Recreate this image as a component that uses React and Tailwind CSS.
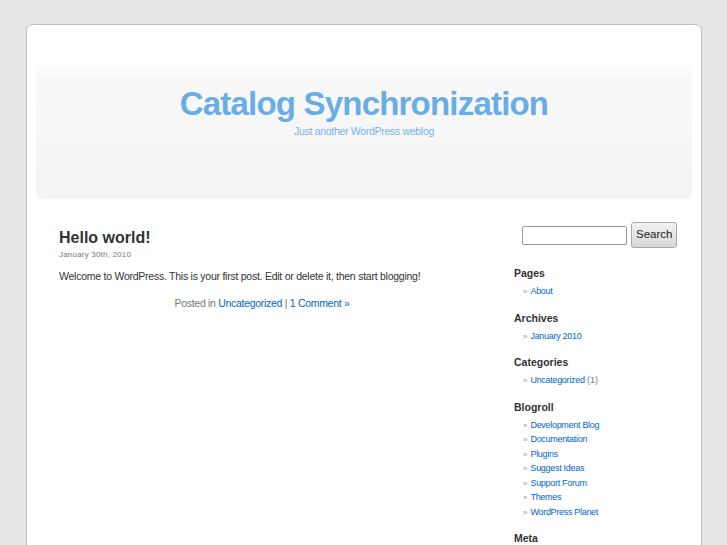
const links = ['Development Blog', 'Documentation', 'Plugins', 'Suggest Ideas', 'Support Forum', 'Themes', 'WordPress Planet'];

const font = { fontFamily: '"Liberation Sans", Arial, sans-serif' };

function Widget({ title, children }) {
  return (
    <li className="mb-[12px]">
      <h2 className="text-[10.5px] font-bold text-[#333] leading-[14px] mb-[4px]">{title}</h2>
      <ul className="pl-[9px]">{children}</ul>
    </li>
  );
}

function Item({ children, extra }) {
  return (
    <li className="h-[14.5px] text-[9px] leading-[14.5px] text-[#999] whitespace-nowrap">
      <span className="mr-[3px] text-[8px] leading-[14.5px]">»</span>
      <a href="#" className="text-[#0066cc] tracking-[-0.3px] leading-[14.5px]">{children}</a>
      {extra && <span className="text-[#777]"> {extra}</span>}
    </li>
  );
}

export default function App() {
  return (
    <div className="min-h-[545px] h-[545px] overflow-hidden bg-[#e7e7e7] pt-[24px]" style={font}>
      <div className="ml-[26px] w-[676px] h-[600px] bg-white border border-[#c0c0c0] rounded-t-[7px] pt-[42px] px-[9px]">
        <div className="h-[132px] rounded-b-[8px] bg-[#fbfbfb] pt-[10px]">
          <div className="h-[122px] rounded-b-[8px] bg-gradient-to-b from-[#f9f8f8] to-[#f4f4f4] flex flex-col items-center pt-[8px]">
            <h1 className="text-[33px] font-bold text-[#68ade6] tracking-[-0.8px] leading-[38px]">Catalog Synchronization</h1>
            <div className="text-[10.5px] text-[#7ab3e6] tracking-[-0.3px] mt-[1px]">Just another WordPress weblog</div>
          </div>
        </div>
        <div className="flex">
          <div className="w-[429px] pl-[23px] pt-[29px]">
            <h2 className="text-[16px] font-bold text-[#333] leading-[20px]">Hello world!</h2>
            <div className="text-[8px] text-[#777] mt-[1px] tracking-[0.2px]">January 30th, 2010</div>
            <p className="text-[10.5px] text-[#333] mt-[8px] tracking-[-0.25px]">Welcome to WordPress. This is your first post. Edit or delete it, then start blogging!</p>
            <p className="text-[10.5px] text-[#777] mt-[11px] text-center tracking-[-0.3px]">
              Posted in <a href="#" className="text-[#0066cc]">Uncategorized</a> | <a href="#" className="text-[#0066cc]">1 Comment »</a>
            </p>
          </div>
          <div className="w-[200px] pl-[49px] pt-[23px]">
            <div className="flex items-center gap-[4px] pl-[8px]">
              <input className="w-[105px] h-[19px] border border-[#9a9a9a] rounded-[2px] bg-white" />
              <button className="h-[26px] px-[4px] text-[11.5px] text-[#222] border border-[#a8a8a8] rounded-[3px] bg-gradient-to-b from-[#f2f2f2] to-[#d9d9d9]">Search</button>
            </div>
            <ul className="mt-[18px]">
              <Widget title="Pages"><Item>About</Item></Widget>
              <Widget title="Archives"><Item>January 2010</Item></Widget>
              <Widget title="Categories"><Item extra="(1)">Uncategorized</Item></Widget>
              <Widget title="Blogroll">
                {links.map(l => <Item key={l}>{l}</Item>)}
              </Widget>
              <li>
                <h2 className="text-[10.5px] font-bold text-[#333] leading-[14px] mt-[1px]">Meta</h2>
              </li>
            </ul>
          </div>
        </div>
      </div>
    </div>
  );
}
